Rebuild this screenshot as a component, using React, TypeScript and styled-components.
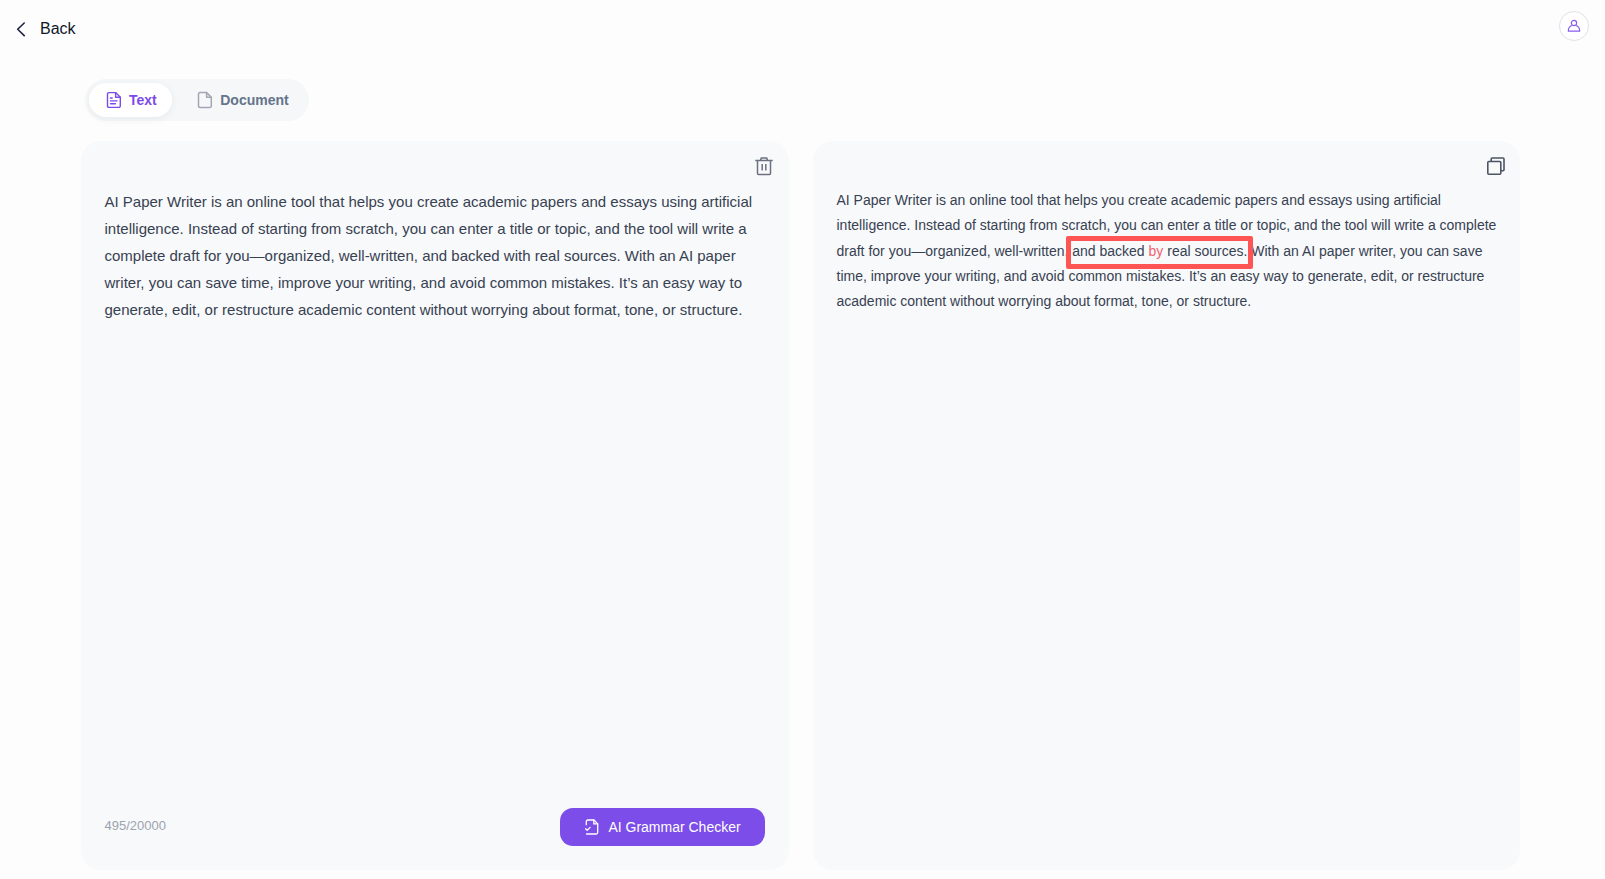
import React from "react";
import styled, { createGlobalStyle } from "styled-components";

const GlobalStyle = createGlobalStyle`
  *, *::before, *::after { box-sizing: border-box; }
  body {
    margin: 0;
    background: #fdfdfd;
    font-family: "Liberation Sans", Arial, sans-serif;
    color: #374151;
  }
  button { font: inherit; border: 0; padding: 0; background: none; cursor: pointer; }
  svg { display: block; flex: none; }
`;

const Page = styled.div`
  height: 879px;
  display: flex;
  flex-direction: column;
  overflow: hidden;
`;

const TopBar = styled.header`
  height: 79px;
  padding: 11px 16px 0 14px;
  display: flex;
  justify-content: space-between;
  align-items: flex-start;
`;

const BackButton = styled.button`
  display: flex;
  align-items: center;
  gap: 12px;
  margin-top: 8px;
  font-size: 16px;
  line-height: 20px;
  color: #0f172a;
`;

const Avatar = styled.button`
  width: 30px;
  height: 30px;
  border: 1px solid #e2e2e8;
  border-radius: 50%;
  background: #fff;
  display: flex;
  align-items: center;
  justify-content: center;
`;

const Main = styled.main`
  padding: 0 85px 0 81px;
  display: flex;
  flex-direction: column;
  align-items: stretch;
`;

const Tabs = styled.nav`
  align-self: flex-start;
  width: 224px;
  height: 42px;
  margin: 0 0 20px 4px;
  padding: 4px;
  border-radius: 21px;
  background: #f6f7f9;
  display: flex;
  gap: 8px;
`;

const Tab = styled.button<{ $active?: boolean }>`
  height: 34px;
  padding: ${(p) => (p.$active ? "0 15px 0 16px" : "0 16px")};
  border-radius: 17px;
  display: flex;
  align-items: center;
  gap: ${(p) => (p.$active ? 6 : 6.5)}px;
  font-size: 14px;
  font-weight: 700;
  color: ${(p) => (p.$active ? "#7c4ae8" : "#64748b")};
  background: ${(p) => (p.$active ? "#fff" : "transparent")};
  box-shadow: ${(p) => (p.$active ? "0 2px 8px rgba(15, 23, 42, 0.06)" : "none")};
`;

const Panels = styled.div`
  display: grid;
  grid-template-columns: 708px 707px;
  gap: 24px;
`;

const Panel = styled.section`
  height: 729px;
  border-radius: 20px;
  background: #f8f9fb;
  display: flex;
  flex-direction: column;
`;

const PanelTools = styled.div<{ $right: number }>`
  height: 47px;
  padding: 15px ${(p) => p.$right}px 0 0;
  display: flex;
  justify-content: flex-end;
  align-items: flex-start;
`;

const Body = styled.p<{ $size: number; $top: number }>`
  margin: ${(p) => p.$top}px 0 0;
  padding: 0 23px 0 23.5px;
  flex: 1;
  font-size: ${(p) => p.$size}px;
  line-height: 1.8;
`;

const Marked = styled.span`
  position: relative;
  white-space: nowrap;

  &::after {
    content: "";
    position: absolute;
    left: -6px;
    right: -6px;
    top: -7px;
    bottom: -10px;
    border: 5px solid #ff5454;
    border-radius: 2px;
  }
`;

const Change = styled.span`
  color: #f4606c;
`;

const PanelFooter = styled.footer`
  height: 62px;
  padding: 0 24px 24px 23.5px;
  display: flex;
  justify-content: space-between;
`;

const Counter = styled.span`
  margin-top: 10px;
  font-size: 13px;
  line-height: 16px;
  color: #9ca3af;
`;

const CheckButton = styled.button`
  width: 205px;
  height: 38px;
  border-radius: 13px;
  background: #7c4de8;
  color: #fff;
  font-size: 14px;
  display: flex;
  align-items: center;
  justify-content: center;
  gap: 8px;
`;

const ChevronIcon = () => (
  <svg width="14" height="16" viewBox="0 0 14 16" fill="none" stroke="#1e2140" strokeWidth="1.6" strokeLinecap="round" strokeLinejoin="round">
    <path d="M10.2 2 3.700 8.300l6.500 6.300" />
  </svg>
);

const UserIcon = () => (
  <svg width="14" height="14" viewBox="0 0 14 14" fill="none" stroke="#8b5cf0" strokeWidth="1.2" strokeLinejoin="round">
    <circle cx="7" cy="4" r="2.6" />
    <path d="M4.900 6.500C2.600 7.200 1.300 9 1.300 12.200h11.400c0-3.200-1.300-5-3.600-5.700" />
  </svg>
);

const TextFileIcon = () => (
  <svg width="18" height="18" viewBox="0 0 18 18" fill="none" stroke="currentColor" strokeWidth="1.4" strokeLinejoin="round" strokeLinecap="round">
    <path d="M4 1.600h6.600l4.700 4.700v8.600a1.500 1.500 0 0 1-1.500 1.500H4a1.500 1.500 0 0 1-1.500-1.500V3.100A1.500 1.500 0 0 1 4 1.600Z" />
    <path d="M10.600 1.600v4.700h4.700M5.500 7h1.700M5.500 9.900h6.500M5.500 12.800h5" />
  </svg>
);

const FileIcon = () => (
  <svg width="18" height="18" viewBox="0 0 18 18" fill="none" stroke="#a0a6b2" strokeWidth="1.500" strokeLinejoin="round">
    <path d="M4 1.600h6.600l4.700 4.700v8.600a1.500 1.500 0 0 1-1.500 1.500H4a1.500 1.500 0 0 1-1.500-1.500V3.100A1.500 1.500 0 0 1 4 1.600Z" />
    <path d="M10.600 1.600v4.700h4.700" />
  </svg>
);

const TrashIcon = () => (
  <svg width="20" height="20" viewBox="0 0 20 20" fill="none" stroke="#6b7280" strokeWidth="1.500">
    <path d="M1.300 4.500h17.400M3.500 4.500v13a1 1 0 0 0 1 1h11a1 1 0 0 0 1-1v-13M6.500 4.300l.8-2.200h5.400l.8 2.200" />
    <path d="M8.200 8v6.500M11.800 8v6.500" />
  </svg>
);

const CopyIcon = () => (
  <svg width="20" height="20" viewBox="0 0 20 20" fill="none" stroke="#4b5563" strokeWidth="1.600" strokeLinejoin="round">
    <rect x="1.800" y="5.500" width="13" height="12.800" rx="1" />
    <path d="M5.200 5.500V3a1 1 0 0 1 1-1H17a1 1 0 0 1 1 1v10.800a1 1 0 0 1-1 1h-2.200" />
  </svg>
);

const FileCheckIcon = () => (
  <svg width="16" height="16" viewBox="0 0 16 16" fill="none" stroke="#fff" strokeWidth="1.300" strokeLinejoin="round" strokeLinecap="round">
    <path d="M2.300 5.700V2.500a1.500 1.500 0 0 1 1.500-1.500h6.200l3.700 3.900v8.600a1.500 1.500 0 0 1-1.500 1.500H2.500" />
    <path d="M9.800 1v3.900h3.900M1.600 9.800l1.600 1.600 2.900-3" />
  </svg>
);

export default function App() {
  return (
    <>
      <GlobalStyle />
      <Page>
        <TopBar>
          <BackButton>
            <ChevronIcon />
            Back
          </BackButton>
          <Avatar aria-label="Account">
            <UserIcon />
          </Avatar>
        </TopBar>
        <Main>
          <Tabs>
            <Tab $active>
              <TextFileIcon />
              Text
            </Tab>
            <Tab>
              <FileIcon />
              Document
            </Tab>
          </Tabs>
          <Panels>
            <Panel>
              <PanelTools $right={15}>
                <button aria-label="Clear">
                  <TrashIcon />
                </button>
              </PanelTools>
              <Body $size={15} $top={0}>
                AI Paper Writer is an online tool that helps you create academic papers and essays using artificial
                intelligence. Instead of starting from scratch, you can enter a title or topic, and the tool will write a
                complete draft for you—organized, well-written, and backed with real sources. With an AI paper writer, you
                can save time, improve your writing, and avoid common mistakes. It’s an easy way to generate, edit, or
                restructure academic content without worrying about format, tone, or structure.
              </Body>
              <PanelFooter>
                <Counter>495/20000</Counter>
                <CheckButton>
                  <FileCheckIcon />
                  AI Grammar Checker
                </CheckButton>
              </PanelFooter>
            </Panel>
            <Panel>
              <PanelTools $right={14}>
                <button aria-label="Copy">
                  <CopyIcon />
                </button>
              </PanelTools>
              <Body $size={14} $top={0.3}>
                AI Paper Writer is an online tool that helps you create academic papers and essays using artificial
                intelligence. Instead of starting from scratch, you can enter a title or topic, and the tool will write a
                complete draft for you—organized, well-written,{" "}
                <Marked>
                  and backed <Change>by</Change> real sources.
                </Marked>{" "}
                With an AI paper writer, you can save time, improve your writing, and avoid common mistakes. It’s an easy
                way to generate, edit, or restructure academic content without worrying about format, tone, or structure.
              </Body>
            </Panel>
          </Panels>
        </Main>
      </Page>
    </>
  );
}
